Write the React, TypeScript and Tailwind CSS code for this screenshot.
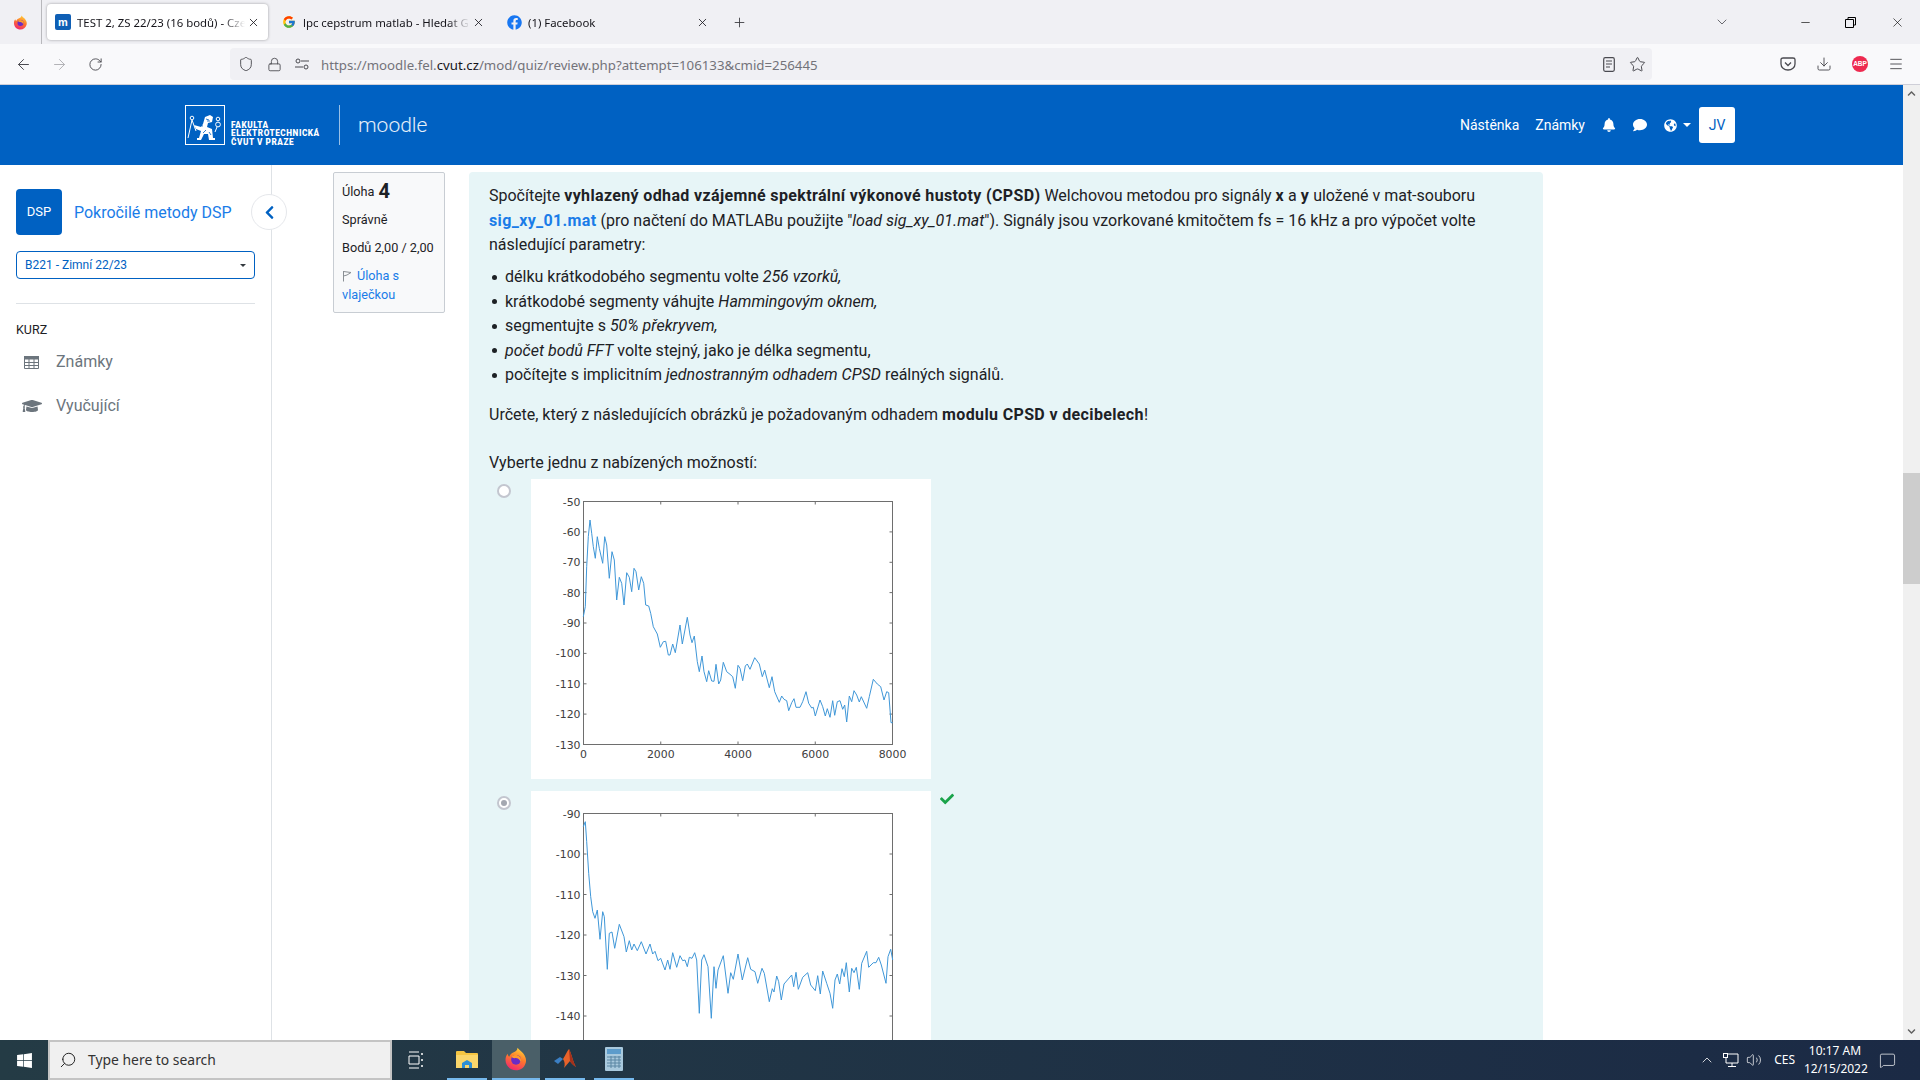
import React from "react";
import { ArrowLeft, ArrowRight, RotateCw, Shield, Lock, Star, Download, Menu, X, Plus, ChevronDown, ChevronUp, Minus, Search, Volume2, MessageSquare } from "lucide-react";
import { FaBell, FaComment, FaGlobeAmericas, FaGraduationCap, FaChevronLeft, FaCheck, FaWindows, FaChevronUp, FaChevronDown, FaFacebook } from "react-icons/fa";
import { FcGoogle } from "react-icons/fc";

const curve1: number[][] = [[190,410],[196,380],[200,260],[205,170],[210,120],[215,160],[220,200],[226,235],[232,170],[238,205],[248,250],[254,170],[260,195],[268,295],[276,215],[283,240],[290,360],[298,292],[305,310],[312,375],[320,278],[328,292],[335,335],[342,265],[348,275],[356,330],[364,290],[371,310],[377,375],[386,378],[392,400],[400,440],[412,462],[421,502],[430,485],[437,484],[445,525],[450,525],[458,492],[466,518],[480,435],[487,492],[502,412],[510,465],[516,488],[523,468],[532,545],[538,575],[546,528],[552,575],[560,605],[566,572],[575,603],[582,604],[588,553],[596,612],[602,600],[610,547],[620,575],[630,583],[638,590],[646,625],[654,556],[660,565],[668,602],[676,558],[682,552],[690,568],[704,533],[718,552],[727,590],[734,570],[748,623],[756,590],[764,635],[778,667],[785,648],[792,658],[800,662],[806,692],[815,668],[822,656],[828,682],[840,682],[848,665],[858,635],[866,670],[875,684],[880,682],[886,708],[900,660],[908,680],[916,708],[922,686],[930,712],[938,662],[944,706],[952,665],[960,662],[968,688],[974,675],[980,726],[988,648],[995,665],[1002,632],[1010,645],[1018,666],[1024,650],[1040,685],[1048,650],[1060,598],[1072,612],[1082,620],[1092,660],[1100,635],[1106,638],[1113,728],[1118,728]];
const curve2: number[][] = [[310,140],[316,125],[320,185],[326,280],[332,350],[338,395],[345,415],[352,390],[360,478],[368,395],[373,410],[382,568],[388,460],[396,456],[404,505],[418,433],[432,470],[439,516],[448,482],[455,510],[462,492],[472,512],[484,485],[498,522],[510,492],[518,522],[525,514],[534,542],[542,535],[555,570],[563,540],[570,568],[578,518],[590,562],[600,527],[608,542],[615,540],[622,560],[628,532],[636,535],[644,518],[650,540],[658,700],[665,540],[672,524],[684,560],[694,715],[702,560],[708,625],[714,570],[730,527],[744,640],[752,578],[760,598],[774,522],[787,600],[803,533],[812,568],[825,575],[833,610],[846,565],[853,580],[868,665],[877,626],[882,636],[890,588],[896,605],[904,660],[912,612],[935,585],[941,620],[948,577],[955,628],[968,592],[983,578],[992,615],[1006,632],[1013,587],[1021,642],[1028,573],[1040,610],[1050,640],[1058,685],[1065,600],[1072,582],[1079,612],[1086,566],[1093,590],[1099,548],[1108,636],[1115,565],[1122,578],[1129,562],[1138,628],[1145,550],[1160,514],[1166,562],[1180,548],[1188,548],[1196,532],[1204,555],[1218,610],[1224,530],[1232,508],[1238,540]];

function Plot({ top, bottom, labels, points, xTicks }: { top: number; bottom: number; labels: [string, number][]; points: string; xTicks: boolean }) {
  const L = 52.5, R = 361.5;
  const xs = [0, 2000, 4000, 6000, 8000];
  return (
    <svg width="400" height="300" viewBox="0 0 400 300" className="block">
      <rect x={L} y={top} width={R - L} height={bottom - top} fill="#fff" stroke="#6e6e6e" strokeWidth="1" />
      {labels.map(([t, y]) => (
        <g key={t}>
          <line x1={L} x2={L + 3} y1={y} y2={y} stroke="#6e6e6e" />
          <line x1={R - 3} x2={R} y1={y} y2={y} stroke="#6e6e6e" />
          <text x={L - 3} y={y + 4} textAnchor="end" fontSize="10.9" fill="#404040" fontFamily="DejaVu Sans, sans-serif">{t}</text>
        </g>
      ))}
      {xs.map((v, i) => {
        const x = L + (i * (R - L)) / 4;
        return (
          <g key={v}>
            <line x1={x} x2={x} y1={top} y2={top + 3} stroke="#6e6e6e" />
            <line x1={x} x2={x} y1={bottom - 3} y2={bottom} stroke="#6e6e6e" />
            {xTicks && <text x={x} y={bottom + 13} textAnchor="middle" fontSize="10.9" fill="#404040" fontFamily="DejaVu Sans, sans-serif">{v}</text>}
          </g>
        );
      })}
      <polyline points={points} fill="none" stroke="#3f97d8" strokeWidth="1" strokeLinejoin="round" />
    </svg>
  );
}

function Firefox({ size, id }: { size: number; id: string }) {
  return (
    <svg width={size} height={size} viewBox="0 0 32 32">
      <defs>
        <linearGradient id={id} x1="0.7" y1="0" x2="0.3" y2="1">
          <stop offset="0" stopColor="#ffd43a" />
          <stop offset="0.45" stopColor="#ff7a2a" />
          <stop offset="1" stopColor="#f0256f" />
        </linearGradient>
      </defs>
      <path d="M18 1c2 3 6 5 8 8 3 4 4 8 3 12-2 7-7 10-13 10C8 31 2 25 2 17c0-3 1-6 3-8 0 2 1 3 2 4 1-3 3-5 6-6 3-1 5-3 5-6z" fill={`url(#${id})`} />
      <circle cx="16" cy="17" r="6.5" fill="#6a2bc4" />
      <path d="M10 13c3-3 8-3 11 0 2 2 2 5 1 7-1-4-5-6-8-5-2 0-3-1-4-2z" fill="#ff9a2e" />
    </svg>
  );
}

function Lion() {
  return (
    <svg width="40" height="40" viewBox="0 0 40 40" className="block">
      <rect x="0.5" y="0.5" width="39" height="39" fill="none" stroke="#fff" strokeWidth="1" />
      <circle cx="7" cy="13" r="1.8" fill="none" stroke="#fff" strokeWidth="1" />
      <path d="M7 15L3 33M7 15l4 11" stroke="#fff" strokeWidth="1" fill="none" />
      <path d="M20 12l5-2 3 2-1 5-4 1-1 4 5 2 1 9h2v2h-6l-1-6h-4l-3 6h-4v-2h2l2-7-5-2-2-4 7 2 2-3z" fill="#fff" />
      <path d="M21 14l3 1M22 16l3 0M21 25l-3 3M14 20l4 1M24 27l2 3" stroke="#0061c2" strokeWidth="0.8" />
      <circle cx="33" cy="14" r="1.8" fill="none" stroke="#fff" strokeWidth="1" />
      <circle cx="33" cy="19.500" r="2.4" fill="none" stroke="#fff" strokeWidth="1" />
      <path d="M32 22l-2 5" stroke="#fff" strokeWidth="1" />
    </svg>
  );
}

function Tab({ active, icon, title, w }: { active?: boolean; icon: React.ReactNode; title: string; w: string }) {
  return (
    <div className={active ? `${w} h-9 flex items-center pl-[8px] pr-[8px] bg-white rounded-[4px] shadow-[0_0_3px_rgba(0,0,0,0.35)]` : `${w} h-9 flex items-center pl-[8px] pr-[8px]`}>
      <span className="w-4 h-4 flex items-center justify-center shrink-0">{icon}</span>
      <span className="ml-[6px] pt-[1px] flex-1 min-w-0 whitespace-nowrap text-[11.4px] text-[#15141a] font-['Noto_Sans'] [mask-image:linear-gradient(to_left,transparent,black_22px)]">{title}</span>
      <X size={13} strokeWidth={1.5} className="shrink-0 ml-[2px] text-[#15141a]" />
    </div>
  );
}

function Item({ children }: { children: React.ReactNode }) {
  return (
    <li className="flex h-[24.5px] items-center">
      <span className="w-[5px] h-[5px] rounded-full bg-[#1d2125] ml-[3px] mr-[8px] shrink-0" />
      <span>{children}</span>
    </li>
  );
}

function Radio({ checked }: { checked?: boolean }) {
  return (
    <span className="w-[14px] h-[14px] mt-[5px] ml-[8px] rounded-full border-2 border-[#c3c6cf] bg-white flex items-center justify-center shrink-0">
      {checked && <span className="w-[6px] h-[6px] rounded-full bg-[#a4a8b1]" />}
    </span>
  );
}

export default function App() {
  const pts1 = curve1.map(([x, y]) => `${(x / 3 - 11).toFixed(1)},${(y / 3 + 1).toFixed(1)}`).join(" ");
  const pts2 = curve2.map(([x, y]) => `${(x / 3 - 51).toFixed(1)},${(y / 3 - 11).toFixed(1)}`).join(" ");
  const B = "font-bold tracking-[0.36px]";
  return (
    <div className="w-full h-screen overflow-hidden flex flex-col bg-white font-['Roboto',sans-serif] text-[#1d2125]">
      {/* browser tabs */}
      <div className="h-[44px] bg-[#f0f0f4] flex items-center shrink-0">
        <div className="w-[42px] h-[44px] border-r border-[#b8b8bc] flex items-center justify-center mr-[5px]">
          <Firefox size={15} id="ffa" />
        </div>
        <Tab active w="w-[221px]" title="TEST 2, ZS 22/23 (16 bodů) - Cze" icon={<span className="w-4 h-4 rounded-[2px] bg-[#0f5fb5] text-white text-[11px] font-bold leading-4 text-center font-['Liberation_Sans']">m</span>} />
        <div className="w-[5px]" />
        <Tab w="w-[220px]" title="lpc cepstrum matlab - Hledat G" icon={<FcGoogle size={14} />} />
        <div className="w-[5px]" />
        <Tab w="w-[219px]" title="(1) Facebook" icon={<FaFacebook size={15} className="text-[#1877f2]" />} />
        <Plus size={15} strokeWidth={1.4} className="ml-[15px] text-[#3c3c40]" />
        <div className="flex-1" />
        <ChevronDown size={16} strokeWidth={1.3} className="text-[#55555a] mr-[69px]" />
        <Minus size={13} strokeWidth={1.2} className="text-black mr-[33px]" />
        <svg width="11" height="11" viewBox="0 0 11 11" className="mr-[34px]"><path d="M3 2.5V.5h7.5v7.5H8.5M.5 2.5h8v8h-8z" fill="none" stroke="#000" /></svg>
        <X size={15} strokeWidth={1} className="text-black mr-[15px]" />
      </div>
      {/* toolbar */}
      <div className="h-[41px] bg-[#f9f9fb] border-b border-[#cfcfd8] flex items-center shrink-0">
        <ArrowLeft size={17} strokeWidth={1.4} className="ml-[15px] text-[#4a4a50]" />
        <ArrowRight size={17} strokeWidth={1.4} className="ml-[19px] text-[#b2b2b6]" />
        <RotateCw size={15} strokeWidth={1.5} className="ml-[20px] text-[#4a4a50]" />
        <div className="ml-[127px] w-[1422px] h-[32px] rounded-[4px] bg-[#f0f0f4] flex items-center">
          <Shield size={16} strokeWidth={1.4} className="ml-[8px] text-[#4a4a50]" />
          <Lock size={15} strokeWidth={1.4} className="ml-[13px] text-[#4a4a50]" />
          <svg width="14" height="12" viewBox="0 0 14 12" className="ml-[13px]"><path d="M6 3h8M0 9h8" stroke="#4a4a50" strokeWidth="1.2" /><circle cx="3" cy="3" r="2" fill="none" stroke="#4a4a50" /><circle cx="11" cy="9" r="2" fill="none" stroke="#4a4a50" /></svg>
          <span className="ml-[12px] pt-[3px] text-[13.25px] text-[#73737a] whitespace-nowrap font-['Noto_Sans']">https://moodle.fel.<span className="text-[#15141a]">cvut.cz</span>/mod/quiz/review.php?attempt=106133&amp;cmid=256445</span>
          <div className="flex-1" />
          <svg width="12" height="15" viewBox="0 0 12 15" className="mr-[14px]"><rect x="0.7" y="0.7" width="10.6" height="13.6" rx="1.5" fill="none" stroke="#4a4a50" strokeWidth="1.2" /><path d="M3 4h6M3 7h6M3 10h4" stroke="#4a4a50" /></svg>
          <Star size={17} strokeWidth={1.4} className="mr-[6px] text-[#4a4a50]" />
        </div>
        <svg width="16" height="16" viewBox="0 0 16 16" className="ml-[128px]"><path d="M1 3.5C1 2.5 2 2 3 2h10c1 0 2 .5 2 1.5V8c0 3.5-3 6-7 6s-7-2.500-7-6z" fill="none" stroke="#4a4a50" strokeWidth="1.3" /><path d="M5 6.500l3 3 3-3" fill="none" stroke="#4a4a50" strokeWidth="1.3" /></svg>
        <Download size={16} strokeWidth={1.4} className="ml-[20px] text-[#4a4a50]" />
        <span className="ml-[20px] w-[16px] h-[16px] rounded-full bg-[#ee2a50] text-white text-[6.5px] font-bold flex items-center justify-center font-['Liberation_Sans']">ABP</span>
        <Menu size={16} strokeWidth={1.4} className="ml-[20px] text-[#4a4a50]" />
      </div>
      {/* page */}
      <div className="flex-1 min-h-0 flex">
        <div className="flex-1 min-w-0 flex flex-col">
          <header className="h-[80px] bg-[#0061c2] flex items-center pl-[185px] pr-[168px] shrink-0">
            <Lion />
            <div className="ml-[6px] mt-[17px] w-[88px] text-white font-['Roboto'] font-black text-[8.2px] leading-[8.6px] tracking-[0.55px]">
              <div>FAKULTA</div>
              <div>ELEKTROTECHNICKÁ</div>
              <div>ČVUT V PRAZE</div>
            </div>
            <div className="w-px h-[40px] bg-white/60 ml-[20px]" />
            <span className="ml-[18px] pt-[1px] text-white/90 font-light text-[21px]">moodle</span>
            <div className="flex-1" />
            <span className="text-white text-[14px]">Nástěnka</span>
            <span className="ml-[16px] text-white text-[14px]">Známky</span>
            <FaBell size={14} className="ml-[17px] text-white" />
            <FaComment size={14} className="ml-[17px] text-white" />
            <FaGlobeAmericas size={13} className="ml-[17px] text-white" />
            <span className="ml-[6px] w-0 h-0 border-l-[4px] border-r-[4px] border-t-[4px] border-l-transparent border-r-transparent border-t-white" />
            <div className="ml-[8px] w-[36px] h-[36px] rounded-[3px] bg-white flex items-center justify-center text-[#0061c2] text-[14px]">JV</div>
          </header>
          <div className="flex-1 min-h-0 flex relative overflow-hidden">
            {/* sidebar */}
            <aside className="w-[272px] border-r border-[#dee2e6] pt-[24px] px-[16px] shrink-0">
              <div className="flex items-center">
                <div className="w-[46px] h-[46px] rounded-[4px] bg-[#0061c2] text-white text-[13px] flex items-center justify-center">DSP</div>
                <span className="ml-[12px] pt-[1px] text-[16px] text-[#1a7ce8] whitespace-nowrap">Pokročilé metody DSP</span>
              </div>
              <div className="mt-[16px] w-[239px] h-[28px] rounded-[4px] border border-[#0061c2] flex items-center pl-[8px] pr-[8px] text-[12px] text-[#0061c2]">
                <span className="flex-1">B221 - Zimní 22/23</span>
                <span className="w-0 h-0 border-l-[3px] border-r-[3px] border-t-[3px] border-l-transparent border-r-transparent border-t-[#343a40]" />
              </div>
              <div className="mt-[24px] w-[239px] h-px bg-[#dee2e6]" />
              <div className="mt-[18px] text-[12.5px] leading-[15px] text-[#1d2125]">KURZ</div>
              <div className="mt-[3px] flex items-center h-[44px] text-[16px] text-[#6c757d]">
                <svg width="15" height="13" viewBox="0 0 15 13" className="ml-[8px]"><path d="M.5.5h14v12H.5z" fill="none" stroke="#6c757d" /><path d="M0 0h15v3.500H0z" fill="#6c757d" /><path d="M0 6.500h15M0 9.500h15M5 3v10M10 3v10" stroke="#6c757d" /></svg>
                <span className="ml-[17px]">Známky</span>
              </div>
              <div className="flex items-center h-[44px] text-[16px] text-[#6c757d]">
                <FaGraduationCap size={20} className="ml-[6px] text-[#6c757d]" />
                <span className="ml-[14px]">Vyučující</span>
              </div>
            </aside>
            <button className="absolute left-[251px] top-[29px] w-[36px] h-[36px] rounded-full bg-white border border-[#e5e7eb] flex items-center justify-center">
              <FaChevronLeft size={15} className="text-[#0061c2] ml-[1px]" />
            </button>
            {/* quiz info */}
            <div className="ml-[61px] mt-[7px] w-[112px] h-[141px] border border-[#c8cdd3] rounded-[2px] bg-[#f8f9fa] pl-[8px] pr-[4px] pt-[7px] text-[12.7px] shrink-0">
              <div className="h-[24px] flex items-center">Úloha <span className="ml-[4px] text-[20px] font-bold leading-[20px] -mt-[2px]">4</span></div>
              <div className="mt-[6px] h-[19px] flex items-center">Správně</div>
              <div className="mt-[9px] h-[19px] flex items-center whitespace-nowrap">Bodů 2,00 / 2,00</div>
              <div className="mt-[9px] leading-[19px] text-[#1a7ce8]">
                <svg width="10" height="12" viewBox="0 0 10 12" className="inline mr-[5px] align-[-2px]"><path d="M1.5 1v10.500M1.500 1.500L9 2.500 5 5l-3.500 1" fill="none" stroke="#8a8f94" /></svg>
                Úloha s<br />vlaječkou
              </div>
            </div>
            {/* question */}
            <div className="ml-[24px] mt-[7px] w-[1074px] rounded-t-[4px] bg-[#e7f5f7] pt-[12.4px] pl-[20px] shrink-0 text-[16px] leading-[24.5px] self-start h-[900px]">
              <p className="whitespace-nowrap">Spočítejte <b className={B}>vyhlazený odhad vzájemné spektrální výkonové hustoty (CPSD)</b> Welchovou metodou pro signály <b className={B}>x</b> a <b className={B}>y</b> uložené v mat-souboru</p>
              <p className="whitespace-nowrap"><b className={`${B} text-[#1a7ce8]`}>sig_xy_01.mat</b> (pro načtení do MATLABu použijte "<i>load sig_xy_01.mat</i>"). Signály jsou vzorkované kmitočtem fs = 16 kHz a pro výpočet volte</p>
              <p>následující parametry:</p>
              <ul className="mt-[7.2px]">
                <Item>délku krátkodobého segmentu volte <i>256 vzorků,</i></Item>
                <Item>krátkodobé segmenty váhujte <i>Hammingovým oknem,</i></Item>
                <Item>segmentujte s <i>50% překryvem,</i></Item>
                <Item><i>počet bodů FFT</i> volte stejný, jako je délka segmentu,</Item>
                <Item>počítejte s implicitním <i>jednostranným odhadem CPSD</i> reálných signálů.</Item>
              </ul>
              <p className="mt-[15.4px]">Určete, který z následujících obrázků je požadovaným odhadem <b className={B}>modulu CPSD v decibelech</b>!</p>
              <p className="mt-[24px]">Vyberte jednu z nabízených možností:</p>
              <div className="mt-[3px] flex items-start">
                <Radio />
                <div className="ml-[20px] bg-white w-[400px] h-[300px]">
                  <Plot top={22.5} bottom={265.5} points={pts1} xTicks labels={[["-50",22.5],["-60",52.9],["-70",83.3],["-80",113.6],["-90",144],["-100",174.4],["-110",204.8],["-120",235.1],["-130",265.5]]} />
                </div>
              </div>
              <div className="mt-[12px] flex items-start">
                <Radio checked />
                <div className="ml-[20px] bg-white w-[400px] h-[300px]">
                  <Plot top={22.5} bottom={265.5} points={pts2} xTicks={false} labels={[["-90",22.5],["-100",63],["-110",103.5],["-120",144],["-130",184.5],["-140",225]]} />
                </div>
                <FaCheck size={14} className="ml-[9px] mt-[1px] text-[#1aa34a]" />
              </div>
            </div>
          </div>
        </div>
        {/* scrollbar */}
        <div className="w-[17px] bg-[#f0f0f0] flex flex-col items-center shrink-0">
          <FaChevronUp size={9} className="mt-[4px] text-[#606060]" />
          <div className="mt-[375px] w-full h-[111px] bg-[#cdcdcd]" />
          <div className="flex-1" />
          <FaChevronDown size={9} className="mb-[4px] text-[#606060]" />
        </div>
      </div>
      {/* taskbar */}
      <div className="h-[40px] flex items-center shrink-0 bg-gradient-to-r from-[#243b45] to-[#1b2a45] relative">
        <div className="w-[48px] flex justify-center"><FaWindows size={17} className="text-white" /></div>
        <div className="w-[344px] h-[40px] bg-[#f0f0f0] border-2 border-[#c4c4c4] flex items-center">
          <Search size={18} strokeWidth={1.3} className="ml-[9px] text-[#222] -scale-x-100" />
          <span className="ml-[11px] text-[13.9px] text-[#333] font-['Noto_Sans']">Type here to search</span>
        </div>
        <svg width="16" height="18" viewBox="0 0 16 18" className="ml-[16px]"><path d="M1 1h10M1 17h10M1 5h10v8H1z" fill="none" stroke="#fff" strokeWidth="1" /><path d="M14 2v2M14 8v2M14 14v2" stroke="#fff" strokeWidth="1.5" /></svg>
        <div className="ml-[23px] w-[40px] h-[40px] flex items-center justify-center border-b-[2px] border-[#76b9ed]">
          <svg width="22" height="20" viewBox="0 0 22 20"><path d="M0 3a1 1 0 011-1h7l2 2h11a1 1 0 011 1v14H0z" fill="#f5c542" /><path d="M0 6h22v13H0z" fill="#fad66b" /><path d="M6 19v-5l5-3 5 3v5h-3v-3H9v3z" fill="#2d8fd5" /></svg>
        </div>
        <div className="ml-[5px] w-[48px] h-[40px] bg-[#4a5f68] flex items-center justify-center border-b-[2px] border-[#76b9ed]">
          <Firefox size={24} id="ffb" />
        </div>
        <div className="ml-[5px] w-[40px] h-[40px] flex items-center justify-center border-b-[2px] border-[#76b9ed]">
          <svg width="22" height="22" viewBox="0 0 22 22"><path d="M0 13l6-4 3 2-5 5z" fill="#3b7fc4" /><path d="M9 11c2-3 4-8 6-10 2 3 4 13 7 18-3-2-5-4-6-6-2 2-4 5-6 7 1-3 1-6-1-9z" fill="#e8622a" /><path d="M15 1c2 3 4 13 7 18-3-2-5-4-6-6z" fill="#a5301b" /></svg>
        </div>
        <div className="ml-[9px] w-[40px] h-[40px] flex items-center justify-center border-b-[2px] border-[#76b9ed]">
          <svg width="18" height="24" viewBox="0 0 18 24"><rect width="18" height="24" rx="1" fill="#a9c9dd" /><rect x="2" y="2" width="14" height="5" fill="#5d9ccb" /><path d="M2 10h14M2 13h14M2 16h14M2 19h14M6 9v12M10 9v12M14 9v12" stroke="#5a86a3" strokeWidth="1" /></svg>
        </div>
        <div className="flex-1" />
        <ChevronUp size={16} strokeWidth={1.2} className="text-white mr-[8px]" />
        <svg width="16" height="15" viewBox="0 0 16 15" className="mr-[7px]"><path d="M3 1h12v9H3zM9 10v3M5 13.500h8" fill="none" stroke="#fff" /><rect x="0.500" y="0.500" width="4" height="4" fill="#1b2a45" stroke="#fff" /></svg>
        <Volume2 size={16} strokeWidth={1.1} className="text-white" />
        <span className="ml-[12px] text-[12px] text-white font-['Noto_Sans']">CES</span>
        <div className="ml-[9px] w-[62px] text-center text-[12px] leading-[18px] text-white font-['Noto_Sans'] whitespace-nowrap">
          <div>10:17 AM</div>
          <div>12/15/2022</div>
        </div>
        <MessageSquare size={17} strokeWidth={1} className="ml-[13px] mr-[24px] text-white" />
      </div>
    </div>
  );
}
